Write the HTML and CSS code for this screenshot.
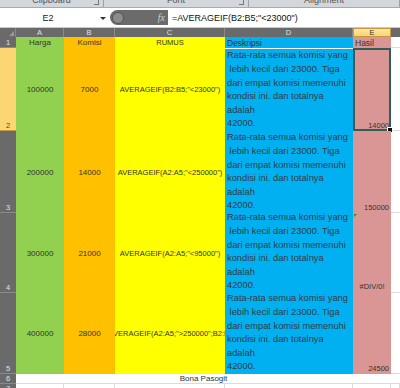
FILE: index.html
```html
<!DOCTYPE html>
<html lang="id">
<head>
  <meta charset="UTF-8">
  <title>AVERAGEIF</title>
  <link rel="stylesheet" href="styles.css">
</head>
<body>
  <div class="ribbon">
    <div class="group g1"><span>Clipboard</span><i class="launch"></i></div>
    <div class="group g2"><span>Font</span><i class="launch"></i></div>
    <div class="group g3"><span>Alignment</span></div>
  </div>

  <div class="fbar">
    <div class="namebox">E2<i class="drop"></i></div>
    <div class="pill">
      <span class="knob"></span>
      <span class="fx">fx</span>
    </div>
    <div class="formula">=AVERAGEIF(B2:B5;"&lt;23000")</div>
  </div>

  <div class="sheet">
    <!-- column headers -->
    <div class="corner"><i></i></div>
    <div class="colh">A</div>
    <div class="colh">B</div>
    <div class="colh">C</div>
    <div class="colh">D</div>
    <div class="colh sel">E</div>
    <div class="colh last"></div>

    <!-- row 1 -->
    <div class="rowh">1</div>
    <div class="cell a">Harga</div>
    <div class="cell b">Komisi</div>
    <div class="cell cc">RUMUS</div>
    <div class="cell d left">Deskripsi</div>
    <div class="cell e left">Hasil</div>
    <div class="blank"></div>

    <!-- row 2 -->
    <div class="rowh sel">2</div>
    <div class="cell a">100000</div>
    <div class="cell b">7000</div>
    <div class="cell cc">AVERAGEIF(B2:B5;"&lt;23000")</div>
    <div class="cell d desc">Rata-rata semua komisi yang<br>&nbsp;lebih kecil dari 23000. Tiga<br>dari empat komisi memenuhi<br>kondisi ini. dan totalnya<br>adalah<br>42000.</div>
    <div class="cell e val">14000<span class="selbox"><i class="handle"></i></span></div>
    <div class="blank"></div>

    <!-- row 3 -->
    <div class="rowh">3</div>
    <div class="cell a">200000</div>
    <div class="cell b">14000</div>
    <div class="cell cc">AVERAGEIF(A2:A5;"&lt;250000")</div>
    <div class="cell d desc">Rata-rata semua komisi yang<br>&nbsp;lebih kecil dari 23000. Tiga<br>dari empat komisi memenuhi<br>kondisi ini. dan totalnya<br>adalah<br>42000.</div>
    <div class="cell e val">150000</div>
    <div class="blank"></div>

    <!-- row 4 -->
    <div class="rowh">4</div>
    <div class="cell a">300000</div>
    <div class="cell b">21000</div>
    <div class="cell cc">AVERAGEIF(A2:A5;"&lt;95000")</div>
    <div class="cell d desc">Rata-rata semua komisi yang<br>&nbsp;lebih kecil dari 23000. Tiga<br>dari empat komisi memenuhi<br>kondisi ini. dan totalnya<br>adalah<br>42000.</div>
    <div class="cell e err">#DIV/0!<i class="flag"></i></div>
    <div class="blank"></div>

    <!-- row 5 -->
    <div class="rowh">5</div>
    <div class="cell a">400000</div>
    <div class="cell b">28000</div>
    <div class="cell cc">=AVERAGEIF(A2:A5;"&gt;250000";B2:B5)</div>
    <div class="cell d desc">Rata-rata semua komisi yang<br>&nbsp;lebih kecil dari 23000. Tiga<br>dari empat komisi memenuhi<br>kondisi ini. dan totalnya<br>adalah<br>42000.</div>
    <div class="cell e val">24500</div>
    <div class="blank"></div>

    <!-- row 6 -->
    <div class="rowh">6</div>
    <div class="cell merged">Bona Pasogit</div>
    <div class="blank"></div>

    <!-- row 7 -->
    <div class="rowh">7</div>
    <div class="grid"></div>
    <div class="grid"></div>
    <div class="grid"></div>
    <div class="grid"></div>
    <div class="grid"></div>
    <div class="grid"></div>
  </div>
</body>
</html>
```

FILE: styles.css
```css
body {
  margin: 0;
  width: 400px;
  height: 388px;
  overflow: hidden;
  background: #fff;
  font-family: "Liberation Sans", Arial, sans-serif;
  color: #333;
}

/* ribbon remains */
.ribbon {
  height: 7px;
  display: flex;
  background: #d3d6db;
  border-bottom: 1px solid #a7abb1;
  overflow: hidden;
}

.ribbon .group {
  position: relative;
  text-align: center;
  border-right: 1px solid #9ea2a8;
  overflow: hidden;
}

.ribbon .group span {
  display: block;
  margin-top: -5px;
  font-size: 9px;
  line-height: 10px;
  color: #555;
}

.g1 { width: 103px; }
.g2 { width: 144px; }
.g3 { flex: 1; border-right: none; }

.launch {
  position: absolute;
  right: 4px;
  top: 0;
  width: 4px;
  height: 4px;
  border-right: 1px solid #777;
  border-bottom: 1px solid #777;
}

/* formula bar */
.fbar {
  height: 19px;
  display: flex;
  align-items: center;
  background: #fff;
  border-bottom: 1px solid #c9c9c9;
}

.namebox {
  position: relative;
  width: 108px;
  box-sizing: border-box;
  padding-right: 12px;
  text-align: center;
  font-size: 9px;
  color: #222;
}

.drop {
  position: absolute;
  right: 2px;
  top: 4px;
  border-left: 3px solid transparent;
  border-right: 3px solid transparent;
  border-top: 3px solid #333;
}

.pill {
  width: 58px;
  height: 15px;
  margin-left: 2px;
  box-sizing: border-box;
  padding: 0 3px 0 2px;
  display: flex;
  align-items: center;
  justify-content: space-between;
  background: #6b6b6b;
  border-radius: 8px 0 0 8px;
}

.knob {
  width: 10px;
  height: 10px;
  border-radius: 50%;
  background: #8c8c8c;
  border: 1px solid #555;
}

.fx {
  font-family: "Liberation Serif", serif;
  font-style: italic;
  font-size: 10px;
  color: #cfcfcf;
}

.formula {
  padding-left: 4px;
  font-size: 9px;
  color: #111;
  white-space: nowrap;
}

/* sheet grid */
.sheet {
  display: grid;
  grid-template-columns: 16px 48px 51px 110px 128px 38px 1fr;
  grid-template-rows: 9px 11px 83px 82px 80px 81px 10px 1fr;
  height: 360px;
}

.corner {
  position: relative;
  background: #6a6a6a;
  border-right: 1px solid #8a8a8a;
}

.corner i {
  position: absolute;
  right: 1px;
  bottom: 1px;
  border-left: 5px solid transparent;
  border-bottom: 5px solid #9a9a9a;
}

.colh {
  background: #6a6a6a;
  color: #e2e2e2;
  font-size: 7.5px;
  line-height: 9px;
  text-align: center;
  border-right: 1px solid #8a8a8a;
}

.colh.sel {
  background: linear-gradient(#feeaa8, #f8d16a);
  color: #333;
  box-shadow: inset 0 0 0 1px #c9973d;
  border-right: none;
}

.colh.last { border-right: none; }

.rowh {
  display: flex;
  align-items: flex-end;
  justify-content: center;
  background: #6a6a6a;
  color: #e2e2e2;
  font-size: 7.5px;
  line-height: 9px;
  border-bottom: 1px solid #8a8a8a;
  box-sizing: border-box;
}

.rowh.sel {
  background: #fbd672;
  color: #444;
  border-bottom-color: #c9973d;
}

.cell {
  position: relative;
  display: flex;
  align-items: center;
  justify-content: center;
  overflow: hidden;
  white-space: nowrap;
  font-size: 7.5px;
  color: #333;
}

.a { background: #92d050; font-size: 8px; }
.b { background: #ffc000; font-size: 8px; }
.cc { background: #ffff00; }
.d { background: #00b0f0; }
.e { background: #da9694; }

.cell.left {
  justify-content: flex-start;
  padding-left: 2px;
  font-size: 8.5px;
}

.desc {
  display: block;
  align-self: end;
  padding-left: 2px;
  font-size: 9.3px;
  line-height: 13.6px;
  color: #333b45;
}

.val {
  align-items: flex-end;
  justify-content: flex-end;
  padding: 0 2px 1px 0;
  overflow: visible;
}

.err {
  align-items: flex-end;
  padding-bottom: 2px;
}

.flag {
  position: absolute;
  left: 1px;
  top: 1px;
  border-right: 3px solid transparent;
  border-top: 3px solid #2e8b2e;
}

.selbox {
  position: absolute;
  inset: 0 0 0 0;
  border: 2px solid #2f5e58;
}

.handle {
  position: absolute;
  right: -4px;
  bottom: -4px;
  width: 4px;
  height: 4px;
  background: #111;
  border: 1px solid #fff;
}

.blank {
  background: #fff;
  border-bottom: 1px solid #dcdcdc;
}

.merged {
  grid-column: 2 / 7;
  background: #fff;
  font-size: 8px;
  border-bottom: 1px solid #dcdcdc;
}

.grid {
  background: #fff;
  border-right: 1px solid #dcdcdc;
}
```
